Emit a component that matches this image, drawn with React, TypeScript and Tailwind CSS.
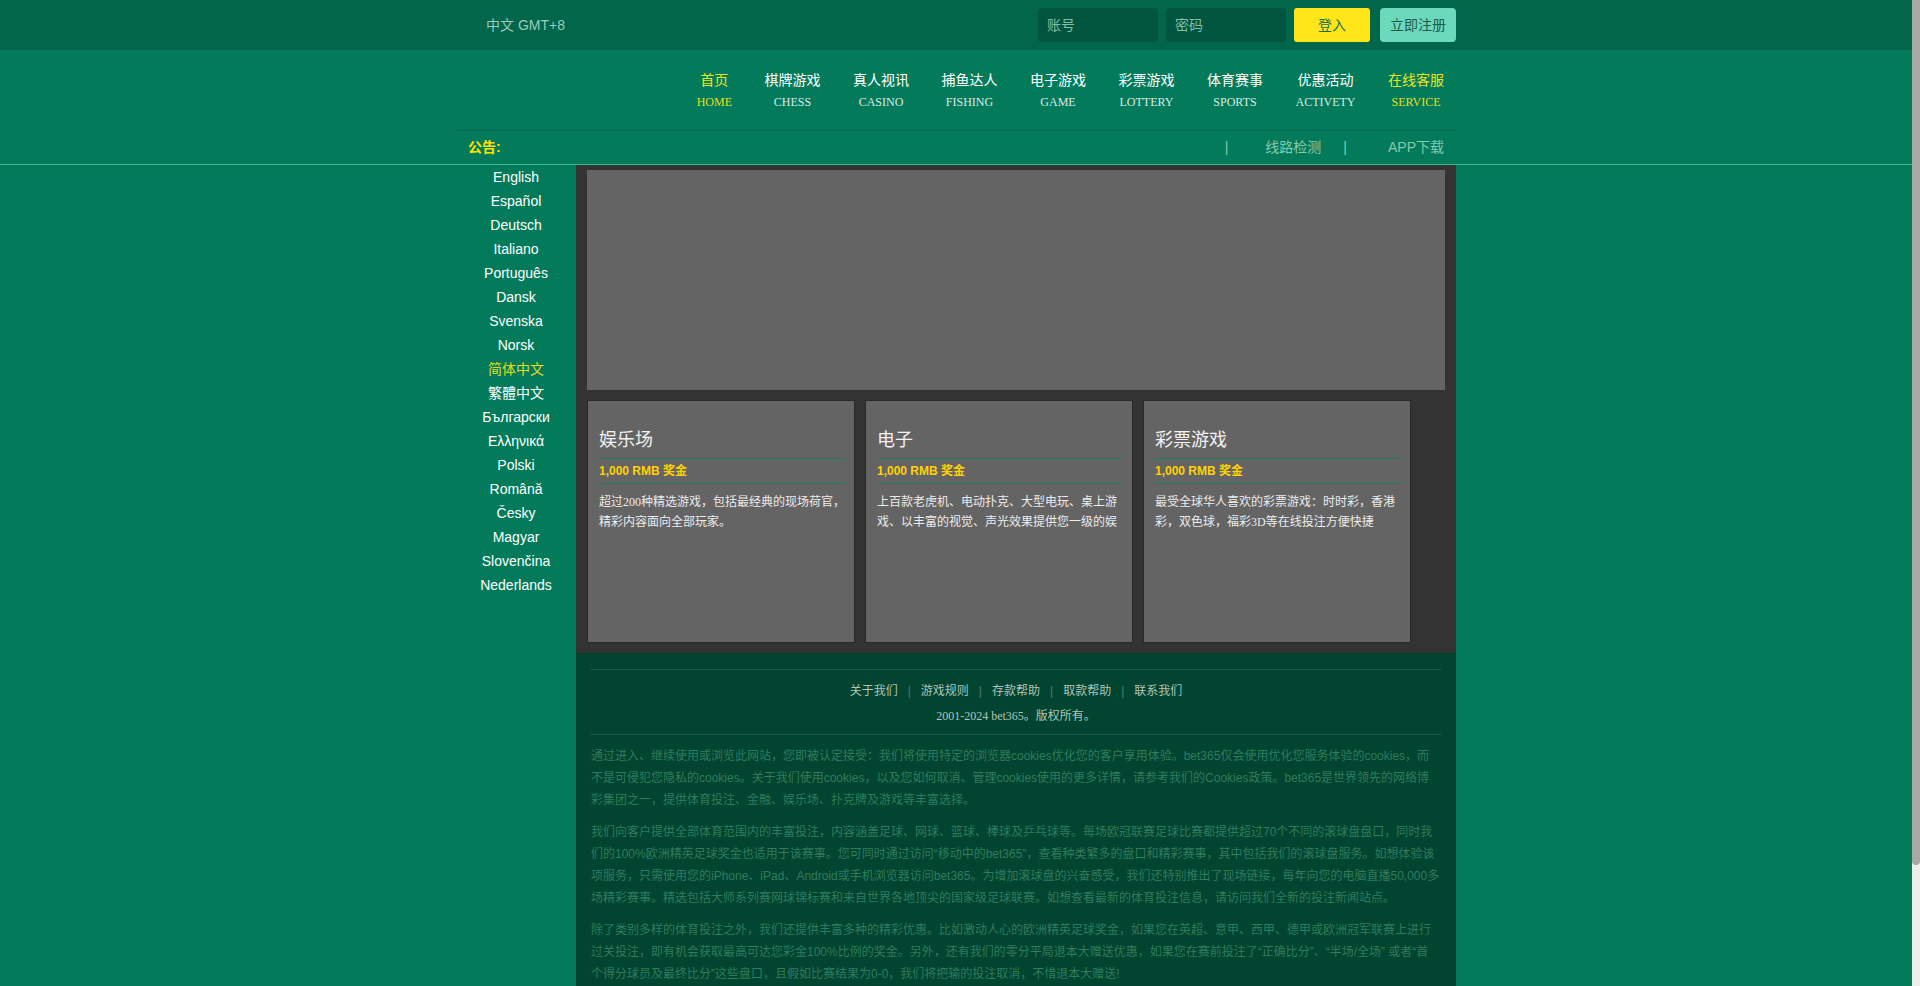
import React from 'react';

const navItems = [
  { zh: '首页', en: 'HOME', active: true },
  { zh: '棋牌游戏', en: 'CHESS' },
  { zh: '真人视讯', en: 'CASINO' },
  { zh: '捕鱼达人', en: 'FISHING' },
  { zh: '电子游戏', en: 'GAME' },
  { zh: '彩票游戏', en: 'LOTTERY' },
  { zh: '体育赛事', en: 'SPORTS' },
  { zh: '优惠活动', en: 'ACTIVETY' },
  { zh: '在线客服', en: 'SERVICE', active: true },
];

const languages = [
  'English', 'Español', 'Deutsch', 'Italiano', 'Português', 'Dansk', 'Svenska', 'Norsk',
  '简体中文', '繁體中文', 'Български', 'Ελληνικά', 'Polski', 'Română', 'Česky', 'Magyar',
  'Slovenčina', 'Nederlands',
];

const cards = [
  { title: '娱乐场', text: '超过200种精选游戏，包括最经典的现场荷官，精彩内容面向全部玩家。' },
  { title: '电子', text: '上百款老虎机、电动扑克、大型电玩、桌上游戏、以丰富的视觉、声光效果提供您一级的娱乐体验。' },
  { title: '彩票游戏', text: '最受全球华人喜欢的彩票游戏：时时彩，香港彩，双色球，福彩3D等在线投注方便快捷' },
];

const footerLinks = ['关于我们', '游戏规则', '存款帮助', '取款帮助', '联系我们'];

const sans = "font-['Liberation_Sans','Noto_Sans_CJK_SC',sans-serif]";
const serif = "font-['Liberation_Serif','Noto_Sans_CJK_SC',serif]";

export default function App() {
  return (
    <div className={`h-screen flex overflow-hidden bg-[#037b5b] ${sans}`}>
      <div className="flex-1 min-w-0 overflow-y-auto [scrollbar-width:none]">
        {/* top bar */}
        <div className="bg-[#02664b] h-[50px]">
          <div className="w-[1000px] mx-auto h-full flex items-center">
            <span className="pl-[30px] text-[14px] text-[#9ccab7]">中文 GMT+8</span>
            <div className="ml-auto flex items-center">
              <input placeholder="账号" className="w-[120px] h-[34px] rounded-[4px] bg-[#01543e] pl-[9px] text-[14px] text-white placeholder:text-[#7ebfa6] outline-none" />
              <input placeholder="密码" type="password" className="ml-[8px] w-[120px] h-[34px] rounded-[4px] bg-[#01543e] pl-[9px] text-[14px] text-white placeholder:text-[#7ebfa6] outline-none" />
              <button className="ml-[8px] w-[76px] h-[34px] rounded-[3px] bg-[#ffe619] text-[14px] text-[#1b6b4f]">登入</button>
              <button className="ml-[10px] w-[76px] h-[34px] rounded-[4px] bg-[#6cd8bc] text-[14px] text-[#1c5c4c]">立即注册</button>
            </div>
          </div>
        </div>

        {/* nav + notice */}
        <div className="border-b border-[#3cbc92]">
          <div className="w-[1000px] mx-auto">
            <div className="h-[80px] pt-[20px] flex justify-end gap-[8.5px]">
              {navItems.map((n) => (
                <div key={n.en} className="px-[12px] flex flex-col items-center">
                  <span className={`text-[14px] leading-[20px] ${n.active ? 'text-[#eee21c]' : 'text-white'}`}>{n.zh}</span>
                  <span className={`${serif} mt-[4px] text-[12px] leading-[16px] ${n.active ? 'text-[#e6dd1c]' : 'text-[#dbe9e2]'}`}>{n.en}</span>
                </div>
              ))}
            </div>
            <div className="border-t border-[#0d6a4e] h-[34px] flex items-center text-[14px]">
              <span className="pl-[12px] font-bold text-[#ffe100]">公告:</span>
              <div className="ml-auto flex items-center pr-[12px] text-[#86c9ad]">
                <span>|</span>
                <span className="ml-[37px]">线路检测</span>
                <span className="ml-[22px]">|</span>
                <span className="ml-[41px]">APP下载</span>
              </div>
            </div>
          </div>
        </div>

        {/* main */}
        <div className="w-[1000px] mx-auto flex">
          <div className="w-[120px] flex flex-col items-center">
            {languages.map((l) => (
              <span key={l} className={`h-[24px] leading-[24px] text-[14px] ${l === '简体中文' ? 'text-[#e3dc1e]' : 'text-white'}`}>{l}</span>
            ))}
          </div>

          <div className="w-[880px]">
            <div className="bg-[#333333] pt-[5px] px-[11px] pb-[10px]">
              <div className="h-[220px] bg-[#646464]" />
              <div className="mt-[10px] flex gap-[10px]">
                {cards.map((c) => (
                  <div key={c.title} className="w-[268px] h-[243px] bg-[#646464] border border-[#2a2a2a] pt-[27px] pl-[11px] pr-[9px]">
                    <div className="text-[18px] leading-[24px] text-[#f2f2f2] pb-[6px] border-b border-[#247a5c]">{c.title}</div>
                    <div className="py-[2px] text-[12px] leading-[20px] font-bold text-[#ffd200] border-b border-[#247a5c]">1,000 RMB 奖金</div>
                    <p className={`${serif} mt-[8px] h-[40px] overflow-hidden text-[12px] leading-[20px] text-[#ececec]`}>{c.text}</p>
                  </div>
                ))}
              </div>
            </div>

            <div className="bg-[#01442f] pt-[16px] px-[15px] pb-[138px]">
              <div className="border-t border-[#1d5c47]" />
              <div className="mt-[11px] flex justify-center items-center text-[12px] leading-[20px] text-[#b0c4ba]">
                {footerLinks.map((f, i) => (
                  <React.Fragment key={f}>
                    {i > 0 && <span className="mx-[10px] text-[#4f7d6c]">|</span>}
                    <span>{f}</span>
                  </React.Fragment>
                ))}
              </div>
              <div className={`${serif} mt-[5px] text-center text-[12px] leading-[20px] text-[#b0c4ba]`}>2001-2024 bet365。版权所有。</div>
              <div className="mt-[8px] border-t border-[#1d5c47]" />
              <div className="mt-[10px] w-[849px] text-[12px] leading-[22px] text-[#2f7c5e]">
                <p className="mb-[10px]">通过进入、继续使用或浏览此网站，您即被认定接受：我们将使用特定的浏览器cookies优化您的客户享用体验。bet365仅会使用优化您服务体验的cookies，而不是可侵犯您隐私的cookies。关于我们使用cookies，以及您如何取消、管理cookies使用的更多详情，请参考我们的Cookies政策。bet365是世界领先的网络博彩集团之一，提供体育投注、金融、娱乐场、扑克牌及游戏等丰富选择。</p>
                <p className="mb-[10px]">我们向客户提供全部体育范围内的丰富投注，内容涵盖足球、网球、篮球、棒球及乒乓球等。每场欧冠联赛足球比赛都提供超过70个不同的滚球盘盘口，同时我们的100%欧洲精英足球奖金也适用于该赛事。您可同时通过访问“移动中的bet365”，查看种类繁多的盘口和精彩赛事，其中包括我们的滚球盘服务。如想体验该项服务，只需使用您的iPhone、iPad、Android或手机浏览器访问bet365。为增加滚球盘的兴奋感受，我们还特别推出了现场链接，每年向您的电脑直播50,000多场精彩赛事。精选包括大师系列赛网球锦标赛和来自世界各地顶尖的国家级足球联赛。如想查看最新的体育投注信息，请访问我们全新的投注新闻站点。</p>
                <p>除了类别多样的体育投注之外，我们还提供丰富多种的精彩优惠。比如激动人心的欧洲精英足球奖金，如果您在英超、意甲、西甲、德甲或欧洲冠军联赛上进行过关投注，即有机会获取最高可达您彩金100%比例的奖金。另外，还有我们的零分平局退本大赠送优惠，如果您在赛前投注了“正确比分”、“半场/全场” 或者“首个得分球员及最终比分”这些盘口，且假如比赛结果为0-0，我们将把输的投注取消，不惜退本大赠送!</p>
              </div>
            </div>
          </div>
        </div>
      </div>

      {/* scrollbar strip */}
      <div className="w-[8px] shrink-0 bg-[#eeeeee]">
        <div className="h-[865px] rounded-b-[4px] bg-[#a8a8a8]" />
      </div>
    </div>
  );
}
